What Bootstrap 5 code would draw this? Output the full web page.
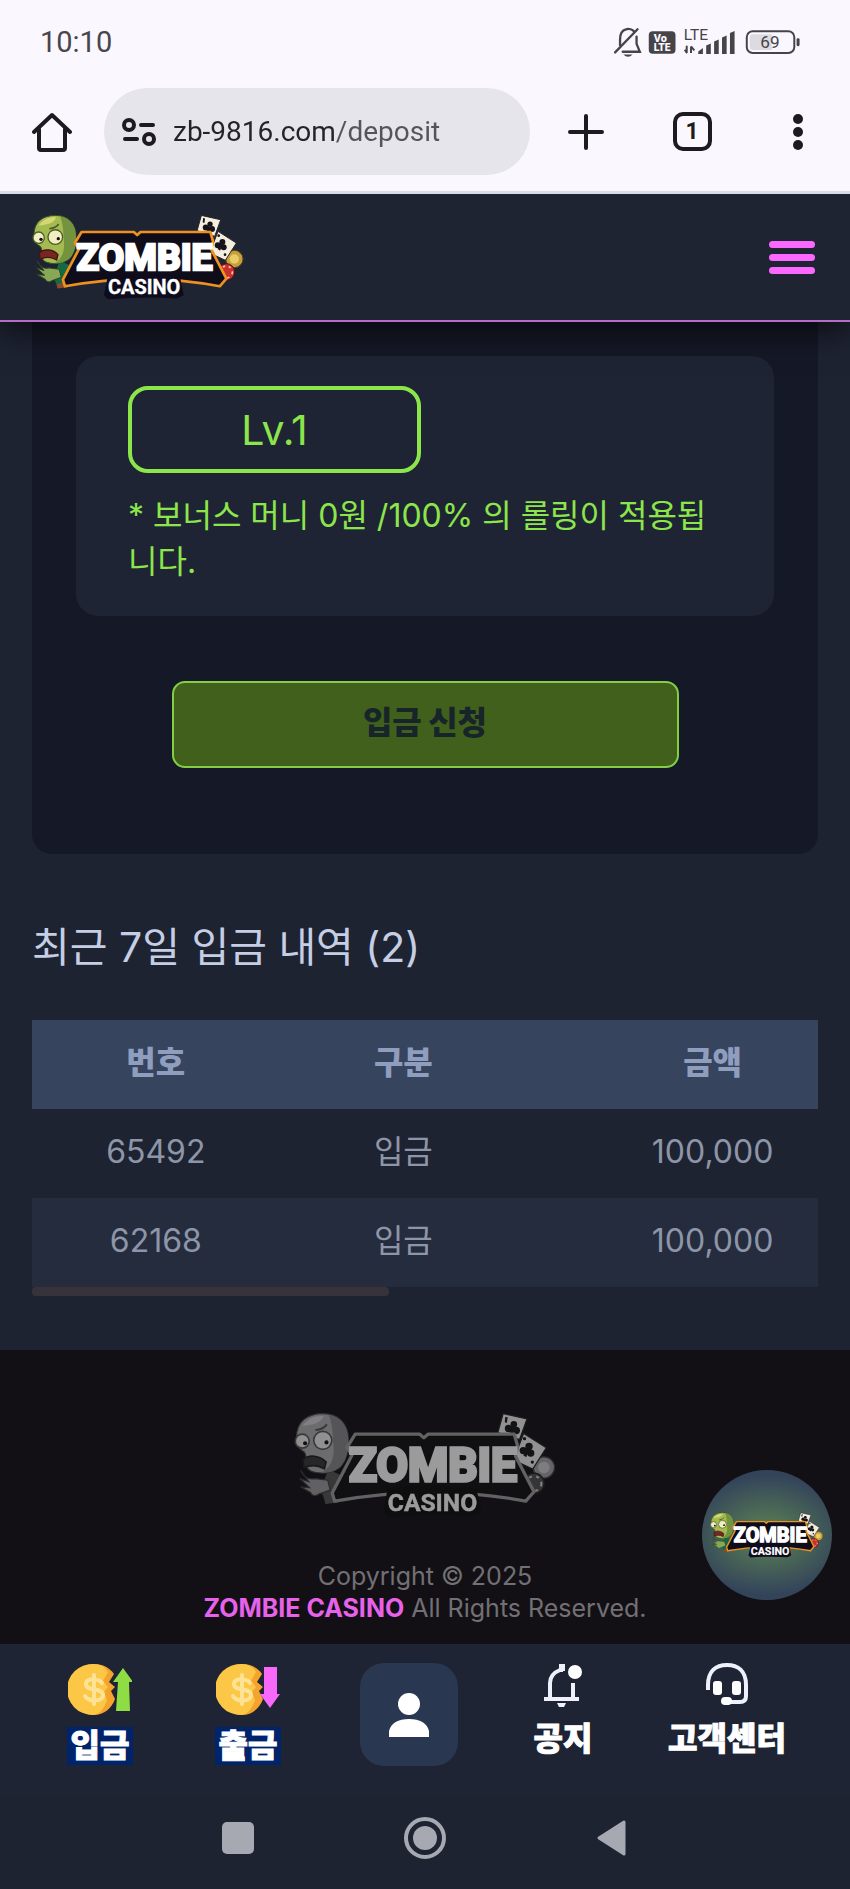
<!DOCTYPE html>
<html lang="ko">
<head>
<meta charset="utf-8">
<meta name="viewport" content="width=device-width, initial-scale=1">
<title>입금 - ZOMBIE CASINO</title>
<link rel="stylesheet" href="https://cdn.jsdelivr.net/npm/bootstrap@5.3.0/dist/css/bootstrap.min.css">
<style>
  body { background: #1e2332; font-family: Inter, "Noto Sans CJK KR", sans-serif; font-size: 32px; line-height: 46px; color: #8d96a8; }
  svg { display: block; flex: none; }
  button, a { color: inherit; }
  .bare { border: 0; background: none; padding: 0; }

  .phone-top { position: relative; z-index: 3; background: #faf8fe; border-bottom: 3px solid #d9dce9; color: #1d1b20; font-family: Roboto, sans-serif; }
  .status-row { height: 88px; padding: 0 45px 4px 40px; }
  .clock { font-size: 29px; color: #48464b; }
  .tool-row { padding: 0 36px 16px 32px; }
  .address { height: 87px; width: 426px; margin-left: 32px; padding: 0 24px 0 18px; background: #e7e5ec; gap: 17px; }
  .address input { border: 0; outline: 0; min-width: 0; width: 100%; padding: 0; font-size: 28px; line-height: 40px; height: 40px;
    background: linear-gradient(90deg, #242329 163px, #56545b 163px); -webkit-background-clip: text; background-clip: text; -webkit-text-fill-color: transparent; }
  .tools { margin-left: 38px; }
  .tab-count { width: 39px; height: 39px; border: 4px solid #1d1b20; border-radius: 10px; font-size: 23px; line-height: 30px; font-weight: 700; }

  .site-head { height: 128px; padding: 0 35px 0 32px; background: #1f2432; border-bottom: 2px solid #b66ccb; box-shadow: 0 10px 30px rgba(0,0,0,.6); z-index: 2; }
  .burger { width: 46px; gap: 6px; }
  .burger span { height: 7px; border-radius: 4px; background: #fb68ff; }

  .page { padding: 0 32px 54px; }
  .deposit-card { background: #151826; border-radius: 0 0 20px 20px; padding: 34px 44px 86px; }
  .bonus-box { background: #1e2433; border-radius: 22px; padding: 30px 52px 31px; color: #8ce64b; }
  .level { width: 293px; height: 87px; border: 4px solid #8ce64b; border-radius: 20px; font-size: 41px; margin-bottom: 20px; }
  .apply { width: 507px; max-width: 100%; height: 87px; margin-top: 65px; border: 2px solid #82cf45; border-radius: 13px; background: #40601c; color: #17242a; font-weight: 900; line-height: 42px; padding-bottom: 4px; }
  .list-title { font-size: 41px; line-height: 56px; margin: 65px 0 45px; font-weight: 400; color: #c5cee4; }
  .history { table-layout: fixed; width: 100%; text-align: center; }
  .history th, .history td { height: 89px; padding: 0 0 4px; vertical-align: middle; border: 0; }
  .history th:nth-child(3), .history td:nth-child(3) { padding-left: 80px; }
  .history thead { background: #37445e; color: #8f9dbe; }
  .history th { font-weight: 900; }
  .history tbody tr:nth-child(2) { background: #252c3e; }
  .scroll-thumb { width: 357px; height: 9px; border-radius: 4px; background: #38333a; }

  .site-foot { background: #121014; padding: 62px 0 20px; font-size: 25px; line-height: 32px; color: #727074; }
  .foot-logo { filter: grayscale(1); opacity: .58; margin-bottom: 42px; }
  .brand { color: #e762ea; font-weight: 700; }
  .float-chat { width: 130px; height: 130px; right: 18px; top: 120px; border-radius: 50%; background: radial-gradient(ellipse 62% 46% at 50% 50%, #5e8453, #33445a 100%); }

  .tab-bar { display: grid; grid-template-columns: 148fr 148fr 174fr 134fr 194fr; padding: 19px 26px 0; height: 152px; background: #1e2433; font-weight: 900; line-height: 38px; }
  .tab-bar a { text-decoration: none; color: #fff; }
  .tab-bar a svg { margin-bottom: 12px; }
  .tab-bar span { -webkit-text-stroke: 1px #fff; }
  .marked { background: #00246c; padding: 0 4px; }
  .me { width: 98px; height: 103px; border-radius: 24px; background: #2a3750; }
  .sys-bar { display: grid; grid-template-columns: repeat(3, 1fr); padding: 0 17% 9px; height: 93px; background: #1e2332; }
</style>
</head>
<body>
<svg width="0" height="0" class="position-absolute" aria-hidden="true">
  <symbol id="coin" viewBox="0 0 64 52">
    <path d="M26 1c9 0 16 4 20 10l-5 8 6 5-4 4 4 8c-3 9-11 16-21 16A25.500 25.500 0 0 1 26 1z" fill="#f4a42c"/>
    <path d="M25 1c8 0 12 3 15 8l-5 9 5 6-4 5 3 8c-3 9-8 15-15 15A25.500 25.500 0 0 1 25 1z" fill="#fcc746"/>
    <path d="M34 20c-2-4-16-6-16 1 0 8 17 3 17 11 0 7-15 7-18 1M26 12v29" fill="none" stroke="#ffe394" stroke-width="4" stroke-linecap="round"/>
  </symbol>
</svg>

<header class="phone-top">
  <div class="status-row d-flex align-items-center justify-content-between">
    <span class="clock">10:10</span>
    <svg width="193" height="33" viewBox="560 74 580 100" role="img" aria-label="status">
      <g fill="none" stroke="#464449" stroke-width="7" stroke-linecap="round">
        <path d="M567 154l68-70"/><path d="M582 132v-18c0-38 34-34 42-24M632 106v22l10 24H590"/>
      </g>
      <path d="M592 160h28q-14 14-28 0z" fill="#464449"/>
      <rect x="669" y="90" width="81" height="68" rx="12" fill="#464449"/>
      <g font-family="Roboto,sans-serif" font-weight="900" fill="#faf8fe"><text x="684" y="121" font-size="33">Vo</text><text x="684" y="151" font-size="31">LTE</text></g>
      <text x="775" y="116" font-size="47" font-family="Roboto,sans-serif" fill="#464449">LTE</text>
      <path d="M784 134v22M778 146l7 10M797 156v-20M797 136l10 12" stroke="#464449" stroke-width="6" fill="none"/>
      <path d="M819 159v-8l14-10v18zM843 159v-26l14-6v32zM867 159v-38l14-6v44zM891 159v-50l14-6v56zM915 159V95l14-6v70z" fill="#464449"/>
      <rect x="966" y="90" width="144" height="66" rx="18" fill="none" stroke="#464449" stroke-width="6"/>
      <path d="M984 99h58v48h-58q-9 0-9-9v-30q0-9 9-9z" fill="#dddbe2"/>
      <text x="1007" y="142" font-size="52" font-family="Roboto,sans-serif" fill="#464449">69</text>
      <rect x="1117" y="111" width="9" height="24" rx="4" fill="#464449"/>
    </svg>
  </div>
  <div class="tool-row d-flex align-items-center">
    <button class="bare" aria-label="Home"><svg width="40" height="40" viewBox="0 0 40 40" fill="none" stroke="#1d1b20" stroke-width="4" stroke-linecap="round" stroke-linejoin="round"><path d="M2 20L20 3l18 17M7 17v19q0 2 2 2h22q2 0 2-2V17"/></svg></button>
    <div class="address d-flex align-items-center rounded-pill">
      <svg width="34" height="30" viewBox="0 0 34 30" fill="none" stroke="#1d1b20" stroke-width="4" stroke-linecap="round"><circle cx="7" cy="8" r="5"/><circle cx="27" cy="22" r="5"/><path d="M19 8h12M3 22h12"/></svg>
      <input type="text" value="zb-9816.com/deposit" aria-label="URL">
    </div>
    <div class="tools d-flex align-items-center justify-content-between flex-grow-1">
      <button class="bare" aria-label="New tab"><svg width="36" height="36" viewBox="0 0 36 36" stroke="#1d1b20" stroke-width="4" stroke-linecap="round"><path d="M18 2v32M2 18h32"/></svg></button>
      <button class="bare tab-count text-center" aria-label="Tabs">1</button>
      <button class="bare" aria-label="Menu"><svg width="34" height="36" viewBox="0 0 34 36" fill="#1d1b20"><circle cx="18" cy="5" r="5"/><circle cx="18" cy="18" r="5"/><circle cx="18" cy="31" r="5"/></svg></button>
    </div>
  </div>
</header>

<nav class="site-head d-flex align-items-center justify-content-between position-relative">
  <a href="#" aria-label="ZOMBIE CASINO"><svg width="213" height="86" viewBox="0 0 640 258">
    <g id="logo">
    <path d="M84 140l34 16 8 52-50 10-12-30z" fill="#136b42"/>
    <path d="M16 142c12 22 22 22 36 20l30 4 6 24-28 10c-10 6-16 4-20-4l-24-14 22 2-24-22 22 8z" fill="#87a857" stroke="#30451f" stroke-width="3"/>
    <path d="M74 212l28-10 6 18-32 4z" fill="#8b4a2c"/>
    <path d="M6 62C6 22 34 4 70 4c40 0 62 26 62 62 0 32-4 50-18 66-16 16-44 20-66 14-16-4-22-16-20-32 2-10 0-16-8-20C8 86 6 78 6 62z" fill="#a4bb51" stroke="#3b4d24" stroke-width="3"/>
    <path d="M84 6c34 8 48 32 48 60 0 32-4 50-18 66-12 12-30 16-46 16 26-18 30-40 28-66-2-30-2-52-12-76z" fill="#73933f"/>
    <path d="M20 34c16-20 34-26 52-24-4 14-22 22-52 24z" fill="#d5d777"/>
    <circle cx="20" cy="71" r="17" fill="#f2eec3" stroke="#4c5d26" stroke-width="4"/>
    <circle cx="70" cy="69" r="22" fill="#f2eec3" stroke="#4c5d26" stroke-width="4"/>
    <circle cx="27" cy="76" r="5" fill="#111"/><circle cx="79" cy="74" r="5" fill="#111"/>
    <path d="M52 44q20-2 28-14" fill="none" stroke="#4c5d26" stroke-width="5"/>
    <path d="M22 116c14-14 42-10 56 6l-4 16c-18-10-34-10-50-2z" fill="#7b2522" stroke="#3b1717" stroke-width="4"/>
    <path d="M509 4l58 13-18 50-53-17z" fill="#f3eedf" stroke="#2a2424" stroke-width="3"/>
    <circle cx="608" cy="135" r="26" fill="#c6a03d" stroke="#5a4316" stroke-width="3"/><circle cx="608" cy="135" r="14" fill="#e7cc68"/>
    <circle cx="584" cy="174" r="25" fill="#c9302c" stroke="#4a1512" stroke-width="3"/><circle cx="584" cy="174" r="18" fill="none" stroke="#f3c9bb" stroke-width="5" stroke-dasharray="7 11"/>
    <path d="M559 52l55 35-33 52-47-22z" fill="#f3eedf" stroke="#2a2424" stroke-width="3"/>
    <g fill="#171219"><circle cx="535" cy="30" r="8"/><circle cx="522" cy="40" r="9"/><circle cx="541" cy="45" r="9"/><path d="M530 36l8 2-6 18-8-3z"/><path d="M514 12l6 1-2 14-5-2z"/>
    <circle cx="572" cy="84" r="9"/><circle cx="558" cy="94" r="9"/><circle cx="576" cy="100" r="9"/><path d="M565 88l8 4-8 18-7-5z"/><circle cx="561" cy="65" r="4"/><circle cx="580" cy="122" r="4"/></g>
    <path d="M149 54H306l10 9 10-9H536l8 28-5 25 45 87-20 23Q336 174 99 217l-6-20 48-92-12-19z" fill="#100d1a" stroke="#ee9122" stroke-width="8" stroke-linejoin="round"/>
    <path d="M228 186q108-14 216 0l12 58-22 10q-94-8-206 2l-12-12z" fill="#0e0b1c"/>
    <g fill="#fff" font-family="Roboto,sans-serif" font-weight="700" text-anchor="middle" stroke="#fff">
      <text x="338" y="168" font-size="112" stroke-width="8">ZOMBIE</text>
      <text x="337" y="240" font-size="60" stroke-width="1">CASINO</text>
    </g>
    </g>
  </svg></a>
  <button class="bare burger d-flex flex-column" aria-label="메뉴"><span class="w-100"></span><span class="w-100"></span><span class="w-100"></span></button>
</nav>

<main class="page">
  <section class="deposit-card">
    <div class="bonus-box">
      <div class="level d-flex align-items-center justify-content-center">Lv.1</div>
      <p class="mb-0">* 보너스 머니 0원 /100% 의 롤링이 적용됩니다.</p>
    </div>
    <button class="apply d-block mx-auto">입금 신청</button>
  </section>

  <h2 class="list-title">최근 7일 입금 내역 (2)</h2>
  <table class="history">
    <colgroup><col style="width:31.5%"><col style="width:31.5%"><col style="width:37%"></colgroup>
    <thead><tr><th>번호</th><th>구분</th><th>금액</th></tr></thead>
    <tbody>
      <tr><td>65492</td><td>입금</td><td>100,000</td></tr>
      <tr><td>62168</td><td>입금</td><td>100,000</td></tr>
    </tbody>
  </table>
  <div class="scroll-thumb"></div>
</main>

<footer class="site-foot position-relative text-center">
  <svg class="foot-logo mx-auto" width="263" height="106" viewBox="0 0 640 258"><use href="#logo"/></svg>
  <p class="mb-0">Copyright © 2025<br><span class="brand">ZOMBIE CASINO</span> All Rights Reserved.</p>
  <a href="#" class="float-chat position-absolute d-flex align-items-center justify-content-center" aria-label="ZOMBIE CASINO"><svg width="114" height="46" viewBox="0 0 640 258"><use href="#logo"/></svg></a>
</footer>

<nav class="tab-bar">
  <a href="#" class="d-flex flex-column align-items-center"><svg width="64" height="52" viewBox="0 0 64 52"><use href="#coin" width="64" height="52"/><path d="M55 5l10 14h-4l1 29H48l2-29h-5z" fill="#8fdc45"/></svg><span class="marked">입금</span></a>
  <a href="#" class="d-flex flex-column align-items-center"><svg width="64" height="52" viewBox="0 0 64 52"><use href="#coin" width="64" height="52"/><path d="M48 4h13v27h3L54 45 44 31h4z" fill="#f768fb"/></svg><span class="marked">출금</span></a>
  <a href="#" class="me d-flex align-items-center justify-content-center mx-auto" aria-label="내 정보"><svg class="mb-0" width="40" height="44" viewBox="0 0 40 44" fill="#fff"><circle cx="20" cy="11" r="11"/><path d="M0 44V38C2 30 9 26 20 26s18 4 20 12v6z"/></svg></a>
  <a href="#" class="d-flex flex-column align-items-center"><svg width="38" height="45" viewBox="0 0 38 45" fill="none" stroke="#eef1fb" stroke-width="4"><path d="M0 36h35M6 36V20C6 12 11 9 16 7h3M29 20v16"/><path d="M18 8V1" stroke-width="6"/><path d="M13 40h9l-2 4h-5z" fill="#eef1fb" stroke="none"/><circle cx="31" cy="9" r="7" fill="#fff" stroke="none"/></svg><span>공지</span></a>
  <a href="#" class="d-flex flex-column align-items-center"><svg width="42" height="45" viewBox="0 0 42 45" fill="none" stroke="#eef1fb" stroke-width="4"><path d="M2 27V22C2 8 10 2 21 2s19 6 19 20v11q0 6-6 6H22"/><rect x="7" y="18" width="9" height="14" rx="3" fill="#fff" stroke="none"/><rect x="26" y="18" width="9" height="14" rx="3" fill="#fff" stroke="none"/><rect x="15" y="34" width="11" height="8" rx="4" fill="#fff" stroke="none"/></svg><span>고객센터</span></a>
</nav>
<nav class="sys-bar align-items-center">
  <button class="bare" aria-label="Recents"><svg class="mx-auto" width="32" height="32"><rect width="32" height="32" rx="5" fill="#a6a8b2"/></svg></button>
  <button class="bare" aria-label="Home"><svg class="mx-auto" width="44" height="44" viewBox="0 0 44 44"><circle cx="22" cy="22" r="19" fill="none" stroke="#a6a8b2" stroke-width="4"/><circle cx="22" cy="22" r="12" fill="#a6a8b2"/></svg></button>
  <button class="bare" aria-label="Back"><svg class="mx-auto" width="30" height="36" viewBox="0 0 30 36"><path d="M2 18L27 2v32z" fill="#a6a8b2" stroke="#a6a8b2" stroke-width="3" stroke-linejoin="round"/></svg></button>
</nav>
<script src="https://cdn.jsdelivr.net/npm/bootstrap@5.3.0/dist/js/bootstrap.bundle.min.js"></script>
</body>
</html>
